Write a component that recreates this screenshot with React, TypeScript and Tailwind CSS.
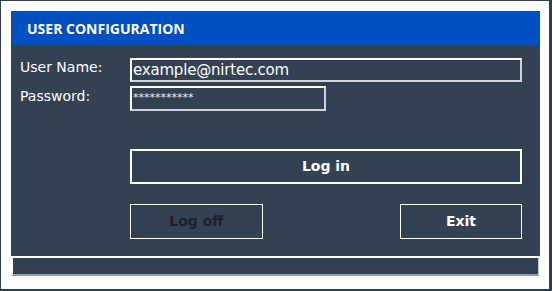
import React from 'react';

const font = { fontFamily: '"DejaVu Sans", "Liberation Sans", sans-serif' };

export default function App() {
    return (
        <div
            className="w-[552px] h-[291px] bg-white border-t border-l border-r-[3px] border-b-2 border-[#2f3e4d] pt-[10px] pl-[10px] pr-[9px] pb-[13px] flex flex-col"
            style={font}
        >
            {/* title bar */}
            <div className="h-[34px] shrink-0 bg-[#0050c3] flex items-center pl-[16px]">
                <span className="text-white font-bold text-[14px] font-['Open_Sans',sans-serif]">USER CONFIGURATION</span>
            </div>

            {/* form body */}
            <div className="flex-1 bg-[#334252] flex flex-col pt-[13px] pl-[9px] pr-[18px]">
                <div className="flex items-center h-[24px]">
                    <label className="w-[110px] text-white text-[14px] -mt-[5px]">User Name:</label>
                    <div className="flex-1 h-[24px] border-2 border-white border-r-[#d0d4d8] border-b-[#d0d4d8] flex items-center pl-[1px]">
                        <span className="text-white text-[15px] leading-none tracking-[-0.2px]">example@nirtec.com</span>
                    </div>
                </div>
                <div className="flex items-center h-[25px] mt-[4px]">
                    <label className="w-[110px] text-white text-[14px] -mt-[5px]">Password:</label>
                    <div className="w-[196px] h-[25px] border-2 border-white border-r-[#d0d4d8] border-b-[#d0d4d8] flex items-center pl-[1px]">
                        <span className="text-[#f4e8ee] text-[11px] leading-none -mt-[2px]">***********</span>
                    </div>
                </div>

                <div className="ml-[110px] mt-[38px] h-[35px] border-2 border-white flex items-center justify-center">
                    <span className="text-white font-bold text-[14px]">Log in</span>
                </div>

                <div className="ml-[110px] mt-[20px] h-[35px] flex justify-between">
                    <div className="w-[133px] h-full border border-white flex items-center justify-center">
                        <span className="text-[#1b2129] font-bold text-[14px]">Log off</span>
                    </div>
                    <div className="w-[122px] h-full border border-white flex items-center justify-center">
                        <span className="text-white font-bold text-[14px]">Exit</span>
                    </div>
                </div>
            </div>

            {/* status bar */}
            <div className="h-[20px] shrink-0 mr-[1px] bg-[#334252] border-t-2 border-l-2 border-white border-r border-b-2 border-r-[#c8c8c8] border-b-[#9a9a9a]"></div>
        </div>
    );
}
